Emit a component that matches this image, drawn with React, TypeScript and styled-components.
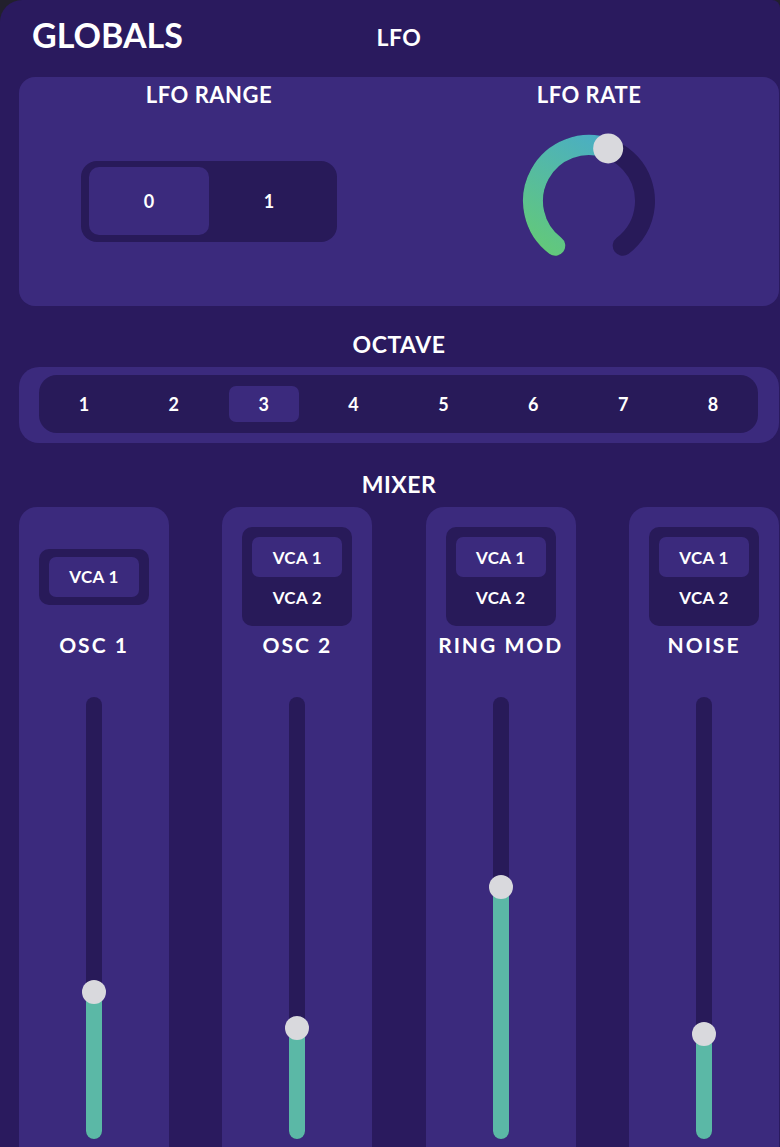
import React from 'react';
import styled, { createGlobalStyle } from 'styled-components';

const C = {
  page: '#22202d',
  bg: '#2a1a5e',
  panel: '#3b2a7d',
  dark: '#281a59',
  thumb: '#d9d9dd',
  teal: '#5bb8a6',
};

const Global = createGlobalStyle`
  html, body { margin: 0; padding: 0; background: ${C.page}; overflow: hidden; }
  body { font-family: Lato, "Noto Sans", sans-serif; color: #ffffff; }
  * { box-sizing: border-box; }
`;

const Shell = styled.main`
  width: 780px;
  height: 1147px;
  background: ${C.bg};
  border-radius: 22px 8px 0 0;
  padding: 0 1px 0 19px;
  overflow: hidden;
  display: flex;
  flex-direction: column;
`;

const Header = styled.header`
  height: 77px;
  display: grid;
  grid-template-columns: 1fr auto 1fr;
  align-items: start;
`;

const Brand = styled.h1`
  margin: 18px 0 0 0;
  padding-left: 13px;
  font-size: 34px;
  font-weight: 700;
  line-height: 1;
`;

const Title = styled.h2<{ $mt?: number }>`
  margin: ${p => p.$mt ?? 0}px 0 0 0;
  font-size: 23px;
  font-weight: 700;
  line-height: 1;
  letter-spacing: 0.5px;
  text-align: center;
`;

const LfoPanel = styled.section`
  height: 229px;
  border-radius: 16px;
  background: ${C.panel};
  display: grid;
  grid-template-columns: 1fr 1fr;
`;

const LfoCol = styled.div`
  display: flex;
  flex-direction: column;
  align-items: center;
  padding-top: 7px;
`;

const SubTitle = styled.h3`
  margin: 0;
  font-size: 22px;
  font-weight: 700;
  line-height: 1;
  letter-spacing: 0.5px;
`;

const Toggle = styled.div`
  margin-top: 55px;
  width: 256px;
  height: 81px;
  padding: 6px 8px 7px 8px;
  border-radius: 16px;
  background: ${C.dark};
  display: flex;
`;

const ToggleOpt = styled.div<{ $on?: boolean }>`
  flex: 1;
  border-radius: 10px;
  background: ${p => (p.$on ? C.panel : 'transparent')};
  display: flex;
  align-items: center;
  justify-content: center;
  font-size: 18px;
  font-weight: 700;
`;

const KnobSvg = styled.svg`
  margin-top: 20px;
  width: 150px;
  height: 150px;
  display: block;
`;

const OctavePanel = styled.section`
  margin-top: 11px;
  padding: 8px 21px 10px 20px;
  border-radius: 20px;
  background: ${C.panel};
`;

const OctaveInner = styled.div`
  height: 58px;
  border-radius: 18px;
  background: ${C.dark};
  display: grid;
  grid-template-columns: repeat(8, 1fr);
  align-items: center;
  justify-items: center;
`;

const OctBtn = styled.div<{ $on?: boolean }>`
  width: 70px;
  height: 36px;
  border-radius: 7px;
  background: ${p => (p.$on ? C.panel : 'transparent')};
  display: flex;
  align-items: center;
  justify-content: center;
  font-size: 18px;
  font-weight: 700;
`;

const MixerRow = styled.section`
  margin-top: 11px;
  flex: 1;
  display: flex;
  justify-content: space-between;
`;

const Channel = styled.div`
  width: 150px;
  background: ${C.panel};
  border-radius: 18px 18px 0 0;
  padding-top: 20px;
  display: flex;
  flex-direction: column;
  align-items: center;
`;

const GroupArea = styled.div`
  height: 99px;
  display: flex;
  align-items: center;
  justify-content: center;
`;

const GroupBox = styled.div<{ $single?: boolean }>`
  background: ${C.dark};
  border-radius: 10px;
  padding: ${p => (p.$single ? '8px 10px' : '10px 10px 9px')};
  display: flex;
  flex-direction: column;
`;

const VcaBtn = styled.div<{ $on?: boolean }>`
  width: 90px;
  height: 40px;
  border-radius: 7px;
  background: ${p => (p.$on ? C.panel : 'transparent')};
  display: flex;
  align-items: center;
  justify-content: center;
  font-size: 17px;
  font-weight: 700;
  letter-spacing: 0.3px;
`;

const ChannelLabel = styled.div`
  margin-top: 8px;
  font-size: 21px;
  font-weight: 700;
  line-height: 1;
  letter-spacing: 2px;
  white-space: nowrap;
`;

const Track = styled.div`
  margin-top: 42px;
  position: relative;
  width: 16px;
  height: 442px;
  border-radius: 8px;
  background: ${C.dark};
`;

const Fill = styled.div`
  position: absolute;
  left: 0;
  right: 0;
  bottom: 0;
  border-radius: 8px;
  background: ${C.teal};
`;

const Thumb = styled.div`
  position: absolute;
  left: -4px;
  width: 24px;
  height: 24px;
  border-radius: 50%;
  background: ${C.thumb};
`;

const R = 56;
const START = 127;
const SPAN = 286;
const polar = (a: number) => [75 + R * Math.cos((a * Math.PI) / 180), 75 + R * Math.sin((a * Math.PI) / 180)];
const arcPath = (a0: number, a1: number) => {
  const [x0, y0] = polar(a0);
  const [x1, y1] = polar(a1);
  const large = a1 - a0 > 180 ? 1 : 0;
  return `M ${x0} ${y0} A ${R} ${R} 0 ${large} 1 ${x1} ${y1}`;
};

const Knob: React.FC<{ value: number }> = ({ value }) => {
  const end = START + SPAN * value;
  const [tx, ty] = polar(end);
  return (
    <KnobSvg viewBox="0 0 150 150">
      <defs>
        <linearGradient id="knobGrad" gradientUnits="userSpaceOnUse" x1="35" y1="125" x2="100" y2="20">
          <stop offset="0" stopColor="#62c87c" />
          <stop offset="1" stopColor="#4aaec4" />
        </linearGradient>
      </defs>
      <path d={arcPath(START, START + SPAN)} fill="none" stroke={C.dark} strokeWidth={20} strokeLinecap="round" />
      <path d={arcPath(START, end)} fill="none" stroke="url(#knobGrad)" strokeWidth={20} strokeLinecap="round" />
      <circle cx={tx} cy={ty} r={15} fill={C.thumb} />
    </KnobSvg>
  );
};

const Slider: React.FC<{ value: number }> = ({ value }) => {
  const travel = 442 - 24;
  const b = value * travel;
  return (
    <Track>
      <Fill style={{ height: b + 12 }} />
      <Thumb style={{ bottom: b }} />
    </Track>
  );
};

const channels = [
  { name: 'OSC 1', vcas: ['VCA 1'], value: 0.323 },
  { name: 'OSC 2', vcas: ['VCA 1', 'VCA 2'], value: 0.237 },
  { name: 'RING MOD', vcas: ['VCA 1', 'VCA 2'], value: 0.574 },
  { name: 'NOISE', vcas: ['VCA 1', 'VCA 2'], value: 0.222 },
];

export default function App() {
  return (
    <>
      <Global />
      <Shell>
        <Header>
          <Brand>GLOBALS</Brand>
          <Title $mt={26}>LFO</Title>
          <div />
        </Header>
        <LfoPanel>
          <LfoCol>
            <SubTitle>LFO RANGE</SubTitle>
            <Toggle>
              <ToggleOpt $on>0</ToggleOpt>
              <ToggleOpt>1</ToggleOpt>
            </Toggle>
          </LfoCol>
          <LfoCol>
            <SubTitle>LFO RATE</SubTitle>
            <Knob value={0.57} />
          </LfoCol>
        </LfoPanel>
        <Title $mt={27}>OCTAVE</Title>
        <OctavePanel>
          <OctaveInner>
            {[1, 2, 3, 4, 5, 6, 7, 8].map(n => (
              <OctBtn key={n} $on={n === 3}>{n}</OctBtn>
            ))}
          </OctaveInner>
        </OctavePanel>
        <Title $mt={30}>MIXER</Title>
        <MixerRow>
          {channels.map(ch => (
            <Channel key={ch.name}>
              <GroupArea>
                <GroupBox $single={ch.vcas.length === 1}>
                  {ch.vcas.map((v, i) => (
                    <VcaBtn key={v} $on={i === 0}>{v}</VcaBtn>
                  ))}
                </GroupBox>
              </GroupArea>
              <ChannelLabel>{ch.name}</ChannelLabel>
              <Slider value={ch.value} />
            </Channel>
          ))}
        </MixerRow>
      </Shell>
    </>
  );
}
